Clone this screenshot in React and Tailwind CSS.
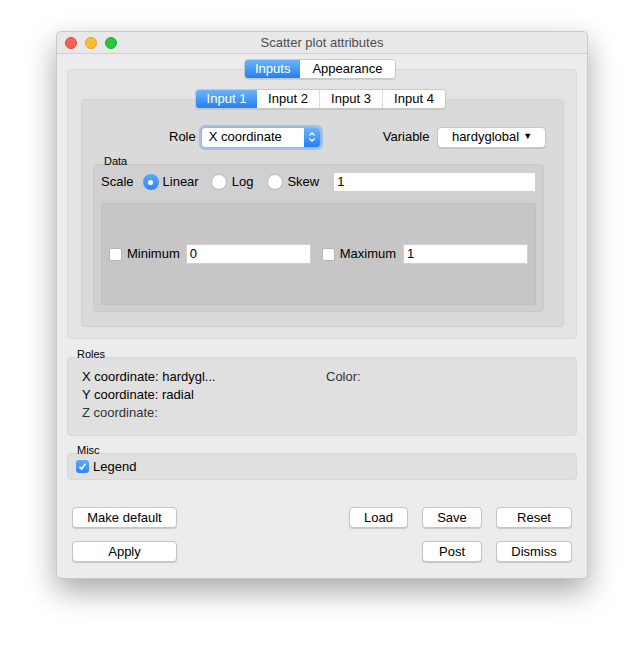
export default function App() {
  const F = { fontFamily: '"Liberation Sans", Arial, sans-serif' };
  const Btn = ({ children, w }) => (
    <div className={`h-[21px] ${w} bg-white border border-[#c4c4c4] rounded-[4px] shadow-[0_1px_1px_rgba(0,0,0,0.15)] flex items-center justify-center text-[13px] text-black`}>{children}</div>
  );
  const Radio = ({ on }) => on ? (
    <div className="w-[16px] h-[16px] rounded-full bg-gradient-to-b from-[#5fa8fa] to-[#2c86f6] flex items-center justify-center"><div className="w-[5px] h-[5px] rounded-full bg-white" /></div>
  ) : <div className="w-[16px] h-[16px] rounded-full bg-white border border-[#b8b8b8]" />;
  return (
    <div style={F} className="w-[644px] h-[660px] bg-white relative text-[13px] text-black">
      <div className="absolute left-[56px] top-[31px] w-[532px] h-[548px] bg-[#ececec] rounded-[5px] shadow-[0_12px_30px_rgba(0,0,0,0.35)] border border-[#c8c8c8] flex flex-col">
        <div className="h-[22px] relative flex items-center justify-center bg-[#e8e8e8] border-b border-[#d0d0d0] rounded-t-[5px]">
          <div className="absolute left-[8px] top-[5px] flex gap-[8px]">
            <div className="w-[12px] h-[12px] rounded-full bg-[#fc5f57] border border-[#e0443e]" />
            <div className="w-[12px] h-[12px] rounded-full bg-[#fdbc2e] border border-[#dea123]" />
            <div className="w-[12px] h-[12px] rounded-full bg-[#28c940] border border-[#1aab29]" />
          </div>
          <span className="text-[13px] text-[#4d4d4d]">Scatter plot attributes</span>
        </div>
        <div className="relative mx-[10px] mt-[15px] h-[270px] bg-[#e3e3e3] rounded-[4px] border border-[#dadada]">
          <div className="absolute left-[176px] top-[-11px] flex h-[20px] rounded-[4px] overflow-hidden border border-[#c8c8c8] shadow-[0_1px_1px_rgba(0,0,0,0.1)]">
            <div className="px-[10px] flex items-center bg-gradient-to-b from-[#6cb3fa] to-[#1e7ff5] text-white">Inputs</div>
            <div className="px-[12px] flex items-center bg-white">Appearance</div>
          </div>
          <div className="relative ml-[13px] mr-[12px] mt-[29px] h-[228px] bg-[#dadada] rounded-[4px] border border-[#d2d2d2]">
            <div className="absolute left-[113px] top-[-11px] flex h-[20px] rounded-[4px] overflow-hidden border border-[#c8c8c8] shadow-[0_1px_1px_rgba(0,0,0,0.1)]">
              <div className="w-[61px] flex items-center justify-center bg-gradient-to-b from-[#6cb3fa] to-[#1e7ff5] text-white">Input 1</div>
              <div className="w-[63px] flex items-center justify-center bg-white border-r border-[#ddd]">Input 2</div>
              <div className="w-[63px] flex items-center justify-center bg-white border-r border-[#ddd]">Input 3</div>
              <div className="w-[62px] flex items-center justify-center bg-white">Input 4</div>
            </div>
            <div className="flex items-center mt-[26px] h-[22px]">
              <span className="ml-[87px]">Role</span>
              <div className="ml-[5px] w-[120px] h-[21px] bg-white rounded-[4px] border border-[#8db7f0] shadow-[0_0_0_2px_rgba(100,160,240,0.45)] flex items-center">
                <span className="pl-[7px] flex-1">X coordinate</span>
                <div className="w-[16px] h-full bg-gradient-to-b from-[#6cb3fa] to-[#1e7ff5] rounded-r-[3px] flex items-center justify-center">
                  <svg width="8" height="12" viewBox="0 0 8 12"><path d="M1.5 4.5 L4 2 L6.5 4.5 M1.5 7.5 L4 10 L6.5 7.5" stroke="white" strokeWidth="1.3" fill="none" /></svg>
                </div>
              </div>
              <span className="ml-[62px]">Variable</span>
              <div className="ml-[8px] w-[109px] h-[21px] bg-white rounded-[4px] border border-[#c8c8c8] shadow-[0_1px_1px_rgba(0,0,0,0.1)] flex items-center justify-center gap-[4px]">
                <span>hardyglobal</span><span className="text-[9px]">▼</span>
              </div>
            </div>
            <div className="relative ml-[11px] mr-[19px] mt-[16px] h-[148px] bg-[#d0d0d0] rounded-[4px] border border-[#c9c9c9]">
              <span className="absolute left-[10px] top-[-12px] text-[11px]">Data</span>
              <div className="flex items-center h-[20px] mt-[7px] ml-[7px]">
                <span>Scale</span>
                <div className="ml-[9px]"><Radio on /></div>
                <span className="ml-[4px]">Linear</span>
                <div className="ml-[12px]"><Radio /></div>
                <span className="ml-[5px]">Log</span>
                <div className="ml-[14px]"><Radio /></div>
                <span className="ml-[4px]">Skew</span>
                <div className="ml-[14px] w-[203px] h-[20px] bg-white border border-[#d0d0d0] flex items-center pl-[3px]">1</div>
              </div>
              <div className="mx-[7px] mt-[11px] h-[102px] bg-[#c6c6c6] rounded-[3px] border border-[#c0c0c0] flex items-center">
                <div className="ml-[7px] w-[13px] h-[13px] bg-white border border-[#b5b5b5] rounded-[2px]" />
                <span className="ml-[5px]">Minimum</span>
                <div className="ml-[6px] w-[125px] h-[20px] bg-white border border-[#d0d0d0] flex items-center pl-[3px]">0</div>
                <div className="ml-[11px] w-[13px] h-[13px] bg-white border border-[#b5b5b5] rounded-[2px]" />
                <span className="ml-[5px]">Maximum</span>
                <div className="ml-[7px] w-[125px] h-[20px] bg-white border border-[#d0d0d0] flex items-center pl-[3px]">1</div>
              </div>
            </div>
          </div>
        </div>
        <div className="relative mx-[10px] mt-[18px] h-[79px] bg-[#e0e0e0] rounded-[4px] border border-[#d8d8d8]">
          <span className="absolute left-[9px] top-[-12px] text-[11px]">Roles</span>
          <div className="flex pt-[10px] pl-[14px]">
            <div className="w-[244px] flex flex-col leading-[18px]">
              <span>X coordinate: hardygl...</span>
              <span>Y coordinate: radial</span>
              <span className="text-[#333]">Z coordinate:</span>
            </div>
            <span className="leading-[18px] text-[#333]">Color:</span>
          </div>
        </div>
        <div className="relative mx-[10px] mt-[17px] h-[27px] bg-[#e0e0e0] rounded-[4px] border border-[#d8d8d8] flex items-center">
          <span className="absolute left-[9px] top-[-12px] text-[11px]">Misc</span>
          <div className="ml-[8px] w-[13px] h-[13px] rounded-[3px] bg-gradient-to-b from-[#5fa8fa] to-[#2c86f6] flex items-center justify-center">
            <svg width="9" height="9" viewBox="0 0 9 9"><path d="M1.5 4.8 L3.6 7 L7.5 1.8" stroke="white" strokeWidth="1.5" fill="none" /></svg>
          </div>
          <span className="ml-[4px]">Legend</span>
        </div>
        <div className="flex mx-[15px] mt-[27px]">
          <Btn w="w-[105px]">Make default</Btn>
          <div className="ml-auto flex gap-[14px]">
            <Btn w="w-[59px]">Load</Btn>
            <Btn w="w-[60px]">Save</Btn>
            <Btn w="w-[76px]">Reset</Btn>
          </div>
        </div>
        <div className="flex mx-[15px] mt-[13px]">
          <Btn w="w-[105px]">Apply</Btn>
          <div className="ml-auto flex gap-[14px]">
            <Btn w="w-[60px]">Post</Btn>
            <Btn w="w-[76px]">Dismiss</Btn>
          </div>
        </div>
      </div>
    </div>
  );
}
